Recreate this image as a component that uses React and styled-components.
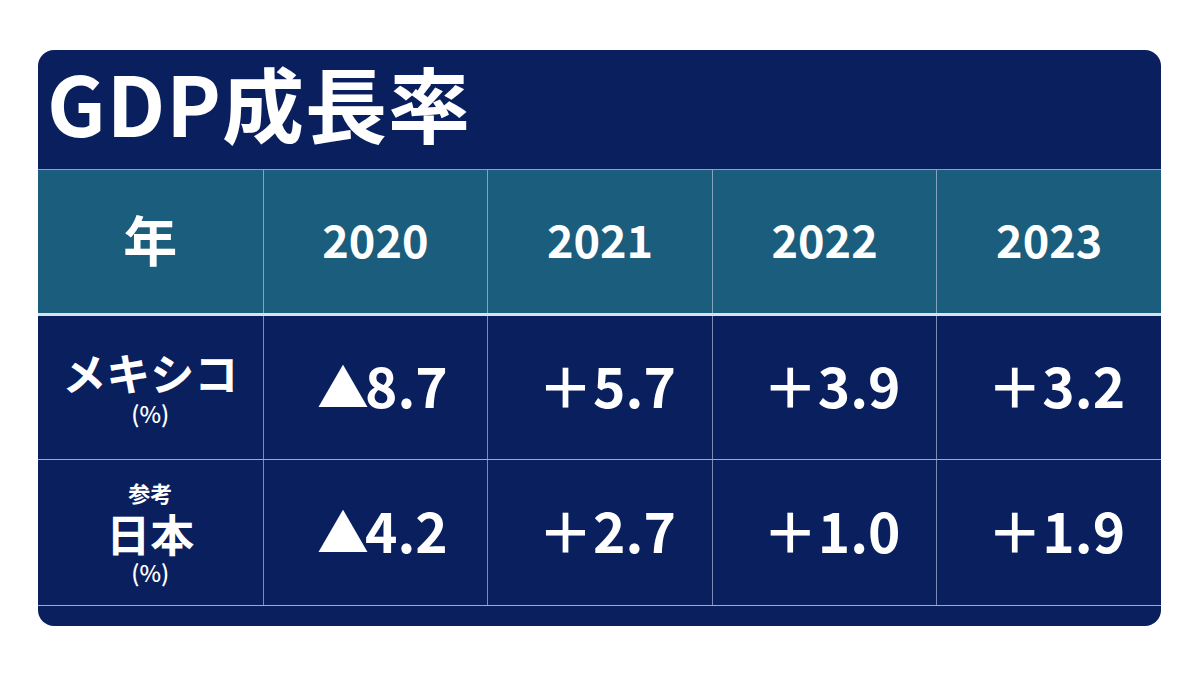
import React from "react";
import styled, { createGlobalStyle } from "styled-components";

const Global = createGlobalStyle`
  html, body { margin: 0; padding: 0; background: #ffffff; }
  body { font-family: "Noto Sans CJK JP", "Noto Sans", sans-serif; }
`;

const Page = styled.div`
  width: 1200px;
  height: 675px;
  padding: 50px 0 0 38px;
  box-sizing: border-box;
`;

const Card = styled.div`
  width: 1123px;
  height: 576px;
  background: #0a1f5d;
  border-radius: 16px;
  overflow: hidden;
  display: flex;
  flex-direction: column;
`;

const TitleBar = styled.div`
  height: 120px;
  display: flex;
  align-items: center;
  padding: 0 0 14px 9px;
  box-sizing: border-box;
  border-bottom: 1px solid #7fa6c4;
`;

const Title = styled.h1`
  margin: 0;
  color: #ffffff;
  font-family: "Noto Sans CJK JP", sans-serif;
  font-weight: 700;
  font-size: 82px;
  line-height: 1.2;
  letter-spacing: 1px;
`;

const Row = styled.div`
  display: grid;
  grid-template-columns: repeat(5, 1fr);
  height: ${(p) => p.$h}px;
  background: ${(p) => (p.$head ? "#1a5d7d" : "#0a1f5d")};
  border-bottom: ${(p) => p.$line};
  box-sizing: content-box;
`;

const Cell = styled.div`
  display: flex;
  flex-direction: column;
  align-items: center;
  justify-content: center;
  color: #ffffff;
  font-weight: 700;
  box-sizing: border-box;
  padding-left: ${(p) => (p.$value ? 14 : 0)}px;
  & + & {
    border-left: 1px solid ${(p) => (p.$head ? "rgba(200,225,240,0.75)" : "rgba(200,212,235,0.6)")};
  }
`;

const HeadText = styled.span`
  font-size: ${(p) => p.$size}px;
  line-height: 1;
  margin-bottom: 6px;
`;

const Value = styled.span`
  font-size: 55px;
  line-height: 1;
  margin-bottom: 6px;
  white-space: nowrap;
`;

const Sign = styled.span`
  display: inline-block;
  margin-right: ${(p) => (p.$tri ? -4 : 0)}px;
  font-size: ${(p) => (p.$tri ? 52 : 55)}px;
`;

const Small = styled.span`
  font-size: ${(p) => p.$size || 22}px;
  line-height: 1;
  font-weight: ${(p) => p.$weight || 700};
`;

const Label = styled.span`
  font-size: 44px;
  line-height: 1;
  margin: ${(p) => p.$m};
`;

const years = ["2020", "2021", "2022", "2023"];
const rows = [
  { label: "メキシコ", note: null, vals: [["▲", "8.7"], ["＋", "5.7"], ["＋", "3.9"], ["＋", "3.2"]], h: 143 },
  { label: "日本", note: "参考", vals: [["▲", "4.2"], ["＋", "2.7"], ["＋", "1.0"], ["＋", "1.9"]], h: 145 },
];

export default function App() {
  return (
    <Page>
      <Global />
      <Card>
        <TitleBar>
          <Title>GDP成長率</Title>
        </TitleBar>
        <Row $head $h={143} $line="3px solid #d6e3ee">
          <Cell $head>
            <HeadText $size={54}>年</HeadText>
          </Cell>
          {years.map((y) => (
            <Cell $head key={y}>
              <HeadText $size={45}>{y}</HeadText>
            </Cell>
          ))}
        </Row>
        {rows.map((r) => (
          <Row key={r.label} $h={r.h} $line="1px solid rgba(210,220,238,0.75)">
            <Cell>
              {r.note && <Small>{r.note}</Small>}
              <Label $m={r.note ? "8px 0 6px" : "0 0 8px"}>{r.label}</Label>
              <Small $size={23} $weight={500}>(%)</Small>
            </Cell>
            {r.vals.map(([s, n], i) => (
              <Cell $value key={i}>
                <Value>
                  <Sign $tri={s === "▲"}>{s}</Sign>
                  {n}
                </Value>
              </Cell>
            ))}
          </Row>
        ))}
      </Card>
    </Page>
  );
}
